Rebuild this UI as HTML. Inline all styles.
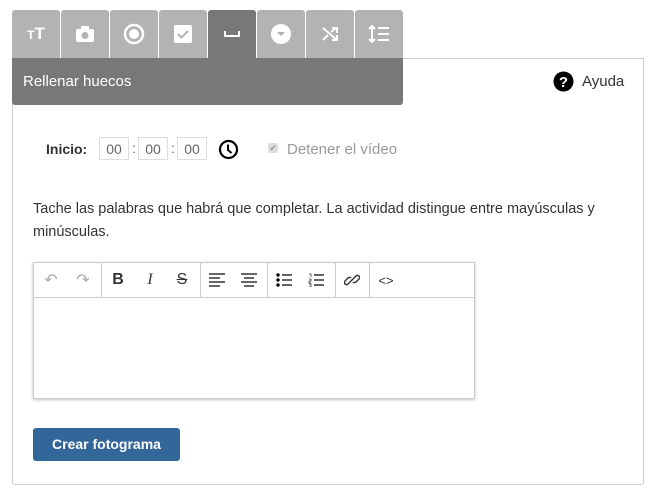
<html><head><style>
body{margin:0;background:#fff;font-family:"Liberation Sans",sans-serif;width:656px;height:495px;position:relative;overflow:hidden}
.a{position:absolute}
.tab{position:absolute;top:10px;width:48px;height:48px;background:#b3b3b3;border-radius:3px 3px 0 0;display:flex;align-items:center;justify-content:center}
.tb{position:absolute;top:0;height:34px;display:flex;align-items:center;justify-content:center;font-size:16px;color:#333}
.sep{position:absolute;top:0;width:1px;height:34px;background:#ccc}
.in{position:absolute;top:137px;width:30px;height:23px;border:1px solid #ddd;font-size:14px;color:#666;line-height:23px;text-align:center;box-sizing:border-box}
</style></head><body>
<div class="a" style="left:12px;top:58px;width:630px;height:425px;border:1px solid #ccc;border-radius:0 0 3px 3px"></div>
<div class="tab" style="left:12px"><span style="color:#fff;font-weight:bold;font-size:17px"><small style="font-size:12px">T</small>T</span></div>
<div class="tab" style="left:61px"><svg width="20" height="18"><rect x="1" y="4" width="18" height="13" rx="2" fill="#fff"/><rect x="6" y="1" width="8" height="4" fill="#fff"/><circle cx="10" cy="10.5" r="3.5" fill="#b3b3b3"/></svg></div>
<div class="tab" style="left:110px"><svg width="22" height="22"><circle cx="11" cy="11" r="9" fill="none" stroke="#fff" stroke-width="2.5"/><circle cx="11" cy="11" r="5" fill="#fff"/></svg></div>
<div class="tab" style="left:159px"><svg width="20" height="20"><rect x="1" y="1" width="18" height="18" rx="2" fill="#fff"/><path d="M5 10l3.5 3.5L15 7" fill="none" stroke="#b3b3b3" stroke-width="2"/></svg></div>
<div class="tab" style="left:208px;background:#787878"><svg width="16" height="8"><path d="M1 1v5h14V1" fill="none" stroke="#fff" stroke-width="2"/></svg></div>
<div class="tab" style="left:257px"><svg width="22" height="22"><circle cx="11" cy="11" r="10" fill="#fff"/><path d="M7 9h8l-4 4z" fill="#b3b3b3"/></svg></div>
<div class="tab" style="left:306px"><svg width="18" height="18"><path d="M2 3l14 12M11 15h5v-5M2 15l5-5M10 7l5-4M11 3h5v5" fill="none" stroke="#fff" stroke-width="2"/></svg></div>
<div class="tab" style="left:355px"><svg width="22" height="20"><path d="M4 2v16M1 5l3-3 3 3M1 15l3 3 3-3M10 4h11M10 10h11M10 16h11" fill="none" stroke="#fff" stroke-width="2"/></svg></div>
<div class="a" style="left:12px;top:58px;width:391px;height:47px;background:#787878;border-radius:0 0 3px 3px;color:#fff;font-size:15px;line-height:47px;padding-left:11px;box-sizing:border-box">Rellenar huecos</div>
<svg class="a" style="left:553px;top:71px" width="21" height="21"><circle cx="10.5" cy="10.5" r="10" fill="#000"/><text x="10.5" y="16" text-anchor="middle" fill="#fff" font-weight="bold" font-size="15" font-family="Liberation Sans">?</text></svg>
<div class="a" style="left:582px;top:73px;font-size:15px;color:#333">Ayuda</div>
<div class="a" style="left:46px;top:141px;font-size:14px;font-weight:bold;color:#333">Inicio:</div>
<div class="in" style="left:99px">00</div><div class="a" style="left:132px;top:140px;font-size:14px;color:#666">:</div>
<div class="in" style="left:138px">00</div><div class="a" style="left:171px;top:140px;font-size:14px;color:#666">:</div>
<div class="in" style="left:177px">00</div>
<svg class="a" style="left:218px;top:139px" width="21" height="21"><circle cx="10.5" cy="10.5" r="8.5" fill="none" stroke="#000" stroke-width="2.2"/><path d="M10 5.5v5.5l3.5 3" fill="none" stroke="#000" stroke-width="2"/></svg>
<div class="a" style="left:268px;top:143px;width:10px;height:10px;background:#ddd;border-radius:2px;font-size:9px;color:#999;line-height:10px;text-align:center">✔</div>
<div class="a" style="left:287px;top:141px;font-size:15px;color:#999">Detener el vídeo</div>
<div class="a" style="left:33px;top:198px;width:600px;font-size:14.5px;color:#333;line-height:23px">Tache las palabras que habrá que completar. La actividad distingue entre mayúsculas y minúsculas.</div>
<div class="a" style="left:33px;top:262px;width:440px;height:135px;border:1px solid #ccc;box-shadow:0 1px 3px rgba(0,0,0,.25)">
<div class="a" style="left:0;top:34px;width:440px;height:1px;background:#ccc"></div>
<div class="tb" style="left:6px;width:22px;color:#aaa">↶</div>
<div class="tb" style="left:38px;width:22px;color:#aaa">↷</div>
<div class="sep" style="left:67px"></div>
<div class="tb" style="left:73px;width:22px;font-weight:bold">B</div>
<div class="tb" style="left:105px;width:22px;font-style:italic;font-family:'Liberation Serif'">I</div>
<div class="tb" style="left:137px;width:22px;text-decoration:line-through">S</div>
<div class="sep" style="left:166px"></div>
<div class="tb" style="left:172px;width:22px"><svg width="16" height="14"><path d="M0 1h16M0 5h11M0 9h16M0 13h11" stroke="#333" stroke-width="1.6"/></svg></div>
<div class="tb" style="left:204px;width:22px"><svg width="16" height="14"><path d="M0 1h16M3 5h10M0 9h16M3 13h10" stroke="#333" stroke-width="1.6"/></svg></div>
<div class="sep" style="left:233px"></div>
<div class="tb" style="left:239px;width:22px"><svg width="16" height="14"><circle cx="2" cy="2" r="1.7"/><circle cx="2" cy="7" r="1.7"/><circle cx="2" cy="12" r="1.7"/><path d="M6 2h10M6 7h10M6 12h10" stroke="#333" stroke-width="1.6"/></svg></div>
<div class="tb" style="left:271px;width:22px"><svg width="16" height="14"><path d="M6 2h10M6 7h10M6 12h10" stroke="#333" stroke-width="1.6"/><path d="M1 1h2v3M1 6h2v2H1v2h2M1 11h2v3H1" stroke="#333" stroke-width=".8" fill="none"/></svg></div>
<div class="sep" style="left:301px"></div>
<div class="tb" style="left:307px;width:22px"><svg width="16" height="16"><path d="M7 9l-3 3a2 2 0 0 1-3-3l3-3a2 2 0 0 1 3 0M9 7l3-3a2 2 0 0 1 3 3l-3 3a2 2 0 0 1-3 0M6 10l4-4" fill="none" stroke="#333" stroke-width="1.4"/></svg></div>
<div class="sep" style="left:335px"></div>
<div class="tb" style="left:341px;width:22px;font-size:13px">&lt;&gt;</div>
</div>
<div class="a" style="left:33px;top:428px;width:147px;height:33px;background:#336699;border-radius:3px;color:#fff;font-weight:bold;font-size:14px;line-height:33px;text-align:center">Crear fotograma</div>
</body></html>
